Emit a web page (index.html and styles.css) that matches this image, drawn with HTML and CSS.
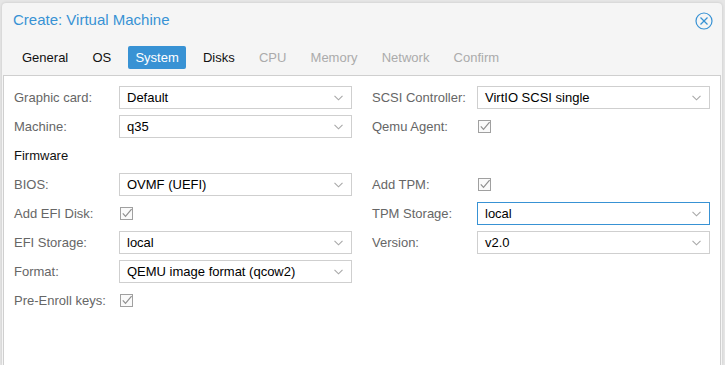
FILE: index.html
```html
<!DOCTYPE html>
<html lang="en">
<head>
    <meta charset="UTF-8">
    <meta name="viewport" content="width=device-width, initial-scale=1.0">
    <title>Create: Virtual Machine</title>
    <link rel="stylesheet" href="styles.css">
</head>
<body>
    <div class="window">
        <div class="window-header">
            <span class="window-title">Create: Virtual Machine</span>
            <svg class="close-icon" width="18" height="18" viewBox="0 0 18 18">
                <circle cx="9" cy="9" r="8" fill="none" stroke="#3892d4" stroke-width="1.2"/>
                <line x1="5.5" y1="5.5" x2="12.5" y2="12.5" stroke="#3892d4" stroke-width="1.2"/>
                <line x1="12.5" y1="5.5" x2="5.5" y2="12.5" stroke="#3892d4" stroke-width="1.2"/>
            </svg>
        </div>

        <div class="tabs">
            <span class="tab">General</span>
            <span class="tab">OS</span>
            <span class="tab active">System</span>
            <span class="tab">Disks</span>
            <span class="tab disabled">CPU</span>
            <span class="tab disabled">Memory</span>
            <span class="tab disabled">Network</span>
            <span class="tab disabled">Confirm</span>
        </div>

        <div class="panel">
            <div class="column">
                <label class="field-label">Graphic card:</label>
                <div class="combo"><span>Default</span><svg class="arrow" width="9" height="6" viewBox="0 0 9 6"><polyline points="0.5,0.8 4.5,4.8 8.5,0.8" fill="none" stroke="#a8a8a8" stroke-width="1.1"/></svg></div>

                <label class="field-label">Machine:</label>
                <div class="combo"><span>q35</span><svg class="arrow" width="9" height="6" viewBox="0 0 9 6"><polyline points="0.5,0.8 4.5,4.8 8.5,0.8" fill="none" stroke="#a8a8a8" stroke-width="1.1"/></svg></div>

                <div class="section-title">Firmware</div>

                <label class="field-label">BIOS:</label>
                <div class="combo"><span>OVMF (UEFI)</span><svg class="arrow" width="9" height="6" viewBox="0 0 9 6"><polyline points="0.5,0.8 4.5,4.8 8.5,0.8" fill="none" stroke="#a8a8a8" stroke-width="1.1"/></svg></div>

                <label class="field-label">Add EFI Disk:</label>
                <div class="check-cell"><svg class="checkbox" width="13" height="13" viewBox="0 0 13 13"><rect x="0.5" y="0.5" width="12" height="12" fill="#fafafa" stroke="#a0a0a0"/><polyline points="2.8,6.3 5.5,9.3 11.6,2.2" fill="none" stroke="#8f8f8f" stroke-width="1.2"/></svg></div>

                <label class="field-label">EFI Storage:</label>
                <div class="combo"><span>local</span><svg class="arrow" width="9" height="6" viewBox="0 0 9 6"><polyline points="0.5,0.8 4.5,4.8 8.5,0.8" fill="none" stroke="#a8a8a8" stroke-width="1.1"/></svg></div>

                <label class="field-label">Format:</label>
                <div class="combo"><span>QEMU image format (qcow2)</span><svg class="arrow" width="9" height="6" viewBox="0 0 9 6"><polyline points="0.5,0.8 4.5,4.8 8.5,0.8" fill="none" stroke="#a8a8a8" stroke-width="1.1"/></svg></div>

                <label class="field-label">Pre-Enroll keys:</label>
                <div class="check-cell"><svg class="checkbox" width="13" height="13" viewBox="0 0 13 13"><rect x="0.5" y="0.5" width="12" height="12" fill="#fafafa" stroke="#a0a0a0"/><polyline points="2.8,6.3 5.5,9.3 11.6,2.2" fill="none" stroke="#8f8f8f" stroke-width="1.2"/></svg></div>
            </div>

            <div class="column">
                <label class="field-label">SCSI Controller:</label>
                <div class="combo"><span>VirtIO SCSI single</span><svg class="arrow" width="9" height="6" viewBox="0 0 9 6"><polyline points="0.5,0.8 4.5,4.8 8.5,0.8" fill="none" stroke="#a8a8a8" stroke-width="1.1"/></svg></div>

                <label class="field-label">Qemu Agent:</label>
                <div class="check-cell"><svg class="checkbox" width="13" height="13" viewBox="0 0 13 13"><rect x="0.5" y="0.5" width="12" height="12" fill="#fafafa" stroke="#a0a0a0"/><polyline points="2.8,6.3 5.5,9.3 11.6,2.2" fill="none" stroke="#8f8f8f" stroke-width="1.2"/></svg></div>

                <div class="spacer"></div>

                <label class="field-label">Add TPM:</label>
                <div class="check-cell"><svg class="checkbox" width="13" height="13" viewBox="0 0 13 13"><rect x="0.5" y="0.5" width="12" height="12" fill="#fafafa" stroke="#a0a0a0"/><polyline points="2.8,6.3 5.5,9.3 11.6,2.2" fill="none" stroke="#8f8f8f" stroke-width="1.2"/></svg></div>

                <label class="field-label">TPM Storage:</label>
                <div class="combo focused"><span>local</span><svg class="arrow" width="9" height="6" viewBox="0 0 9 6"><polyline points="0.5,0.8 4.5,4.8 8.5,0.8" fill="none" stroke="#a8a8a8" stroke-width="1.1"/></svg></div>

                <label class="field-label">Version:</label>
                <div class="combo"><span>v2.0</span><svg class="arrow" width="9" height="6" viewBox="0 0 9 6"><polyline points="0.5,0.8 4.5,4.8 8.5,0.8" fill="none" stroke="#a8a8a8" stroke-width="1.1"/></svg></div>
            </div>
        </div>
    </div>
</body>
</html>
```

FILE: styles.css
```css
body {
    font-family: "Liberation Sans", Arial, sans-serif;
    font-size: 13px;
    background-color: #e6e6e6;
    margin: 0;
    padding: 0;
    overflow: hidden;
}

.window {
    display: flex;
    flex-direction: column;
    margin: 3px 3px 0 2px;
    width: 720px;
    height: 362px;
    background-color: #f5f5f5;
    border-radius: 4px 4px 0 0;
    box-shadow: 0 0 3px rgba(0, 0, 0, 0.15);
}

.window-header {
    display: flex;
    justify-content: space-between;
    align-items: flex-start;
    padding: 8px 9px 0 11px;
}

.window-title {
    font-size: 15px;
    line-height: 18px;
    color: #3892d4;
}

.close-icon {
    margin-top: 1px;
    display: block;
}

.tabs {
    display: flex;
    gap: 10.2px;
    padding-left: 13px;
    margin-top: 16px;
    margin-bottom: 6px;
}

.tab {
    padding: 0 7px;
    line-height: 23px;
    height: 23px;
    color: #111;
    border-radius: 2px;
}

.tab.active {
    background-color: #3892d4;
    color: #fff;
}

.tab.disabled {
    color: #ababab;
}

.panel {
    flex: 1;
    display: flex;
    gap: 20px;
    margin: 0 1px;
    padding: 10px 10px 0 10px;
    background-color: #fff;
    border: 1px solid #cfcfcf;
    border-bottom: none;
    align-items: flex-start;
}

.column {
    display: grid;
    grid-template-columns: 105px 233px;
    grid-auto-rows: 23px;
    row-gap: 6px;
}

.field-label {
    line-height: 23px;
    color: #666;
}

.section-title,
.spacer {
    grid-column: span 2;
    line-height: 23px;
    color: #111;
}

.combo {
    display: flex;
    justify-content: space-between;
    align-items: center;
    border: 1px solid #cfcfcf;
    padding: 0 8px 0 7px;
    color: #000;
    background-color: #fff;
}

.combo.focused {
    border-color: #3892d4;
}

.check-cell {
    display: flex;
    align-items: center;
    padding-left: 1px;
}

.checkbox {
    display: block;
}
```
